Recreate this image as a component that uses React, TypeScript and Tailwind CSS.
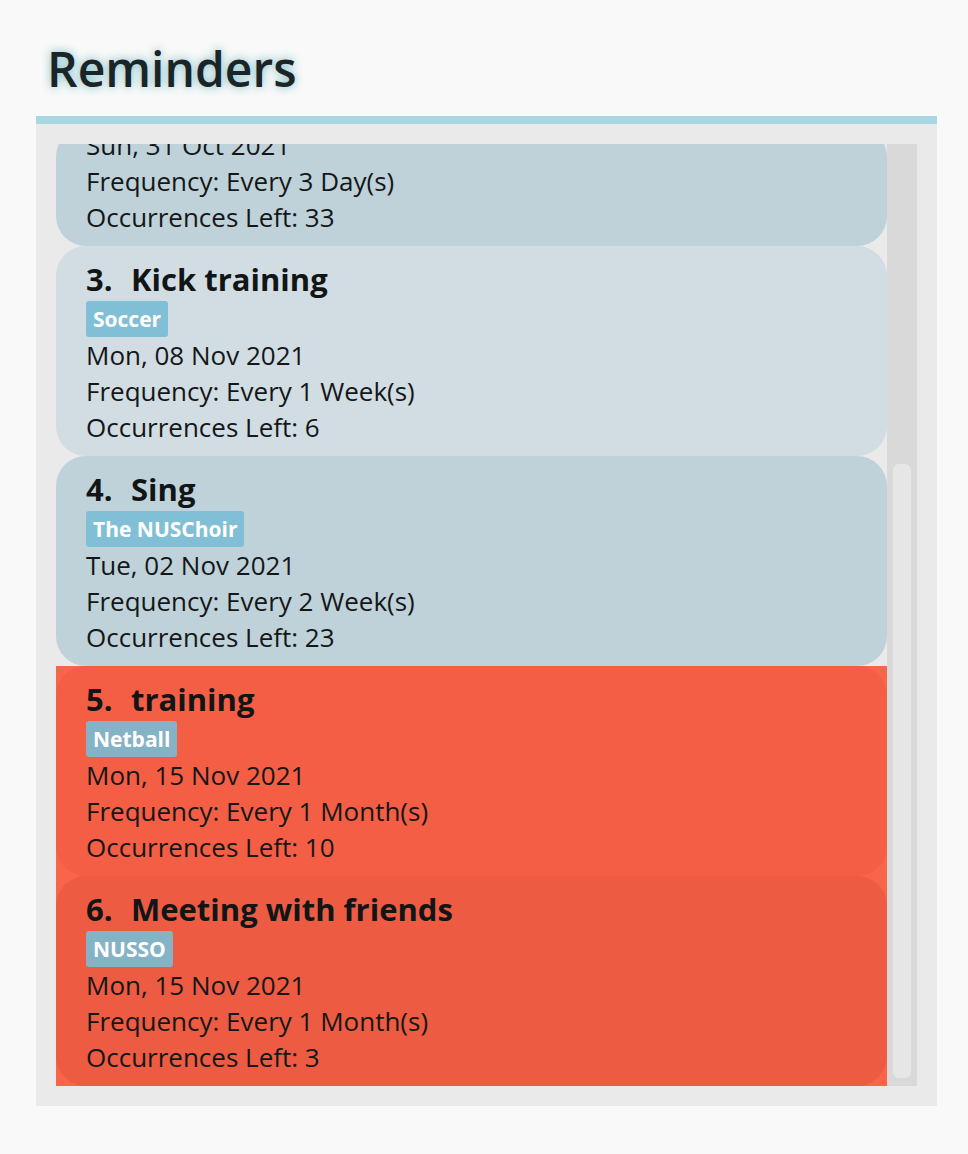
import React from 'react';

interface Reminder {
    index: number;
    title: string;
    tag: string;
    date: string;
    frequency: string;
    left: number;
    tone: 'light' | 'dark' | 'red' | 'redDark';
}

const reminders: Reminder[] = [
    { index: 3, title: 'Kick training', tag: 'Soccer', date: 'Mon, 08 Nov 2021', frequency: 'Every 1 Week(s)', left: 6, tone: 'light' },
    { index: 4, title: 'Sing', tag: 'The NUSChoir', date: 'Tue, 02 Nov 2021', frequency: 'Every 2 Week(s)', left: 23, tone: 'dark' },
    { index: 5, title: 'training', tag: 'Netball', date: 'Mon, 15 Nov 2021', frequency: 'Every 1 Month(s)', left: 10, tone: 'red' },
    { index: 6, title: 'Meeting with friends', tag: 'NUSSO', date: 'Mon, 15 Nov 2021', frequency: 'Every 1 Month(s)', left: 3, tone: 'redDark' },
];

const cellStyles = {
    light: { cell: 'bg-transparent', card: 'bg-[#d1dde2]', tag: 'bg-[#80bfd6]' },
    dark: { cell: 'bg-transparent', card: 'bg-[#bfd2d9]', tag: 'bg-[#80bfd6]' },
    red: { cell: 'bg-[#f96548]', card: 'bg-[#f35e45]', tag: 'bg-[#85b3c6]' },
    redDark: { cell: 'bg-[#f96548]', card: 'bg-[#ec5b42]', tag: 'bg-[#85b3c6]' },
};

function Details({ date, frequency, left }: { date: string; frequency: string; left: number }) {
    return (
        <div className="text-[26px] leading-[36px] text-[#141718]">
            <div>{date}</div>
            <div>Frequency: {frequency}</div>
            <div>Occurrences Left: {left}</div>
        </div>
    );
}

function ReminderCard({ reminder }: { reminder: Reminder }) {
    const s = cellStyles[reminder.tone];
    return (
        <div className={s.cell}>
            <div className={`h-[210px] rounded-[30px] px-[30px] pt-[13px] pb-[11px] ${s.card}`}>
                <div className="flex text-[31px] leading-[40px] font-bold text-[#121516]">
                    <span className="w-[45px]">{reminder.index}.</span>
                    <span>{reminder.title}</span>
                </div>
                <div className="mt-[2px] flex">
                    <span className={`rounded-[3px] px-[7px] py-1 text-[21px] leading-[28px] font-bold text-white ${s.tag}`}>
                        {reminder.tag}
                    </span>
                </div>
                <Details date={reminder.date} frequency={reminder.frequency} left={reminder.left} />
            </div>
        </div>
    );
}

export default function App() {
    return (
        <div className="min-h-[1154px] bg-[#f9f9f9] font-['Open_Sans',sans-serif]">
            <div className="pl-[36px] pr-[31px] pt-[45px]">
                <h1 className="pl-[11px] text-[48px] leading-[48px] font-semibold text-[#1b2426] [text-shadow:0_0_10px_rgba(100,175,185,0.9)]">
                    Reminders
                </h1>

                <div className="mt-[23px] border-t-8 border-[#a9d7e4] bg-[#eaeaea] p-5">
                    <div className="flex h-[942px] overflow-hidden">
                        {/* list, scrolled so the second reminder is half out of view */}
                        <div className="flex-1 overflow-hidden">
                            <div className="-mt-[17px] h-[119px] rounded-[30px] bg-[#bfd2d9] px-[30px] pb-[11px]">
                                <Details date="Sun, 31 Oct 2021" frequency="Every 3 Day(s)" left={33} />
                            </div>
                            {reminders.map(r => (
                                <ReminderCard key={r.index} reminder={r} />
                            ))}
                        </div>

                        {/* scrollbar */}
                        <div className="w-[30px] bg-[#d9d9d9] px-[6px] pt-[320px] pb-[8px]">
                            <div className="h-full rounded-[6px] bg-[#e6e6e6]" />
                        </div>
                    </div>
                </div>
            </div>
        </div>
    );
}
